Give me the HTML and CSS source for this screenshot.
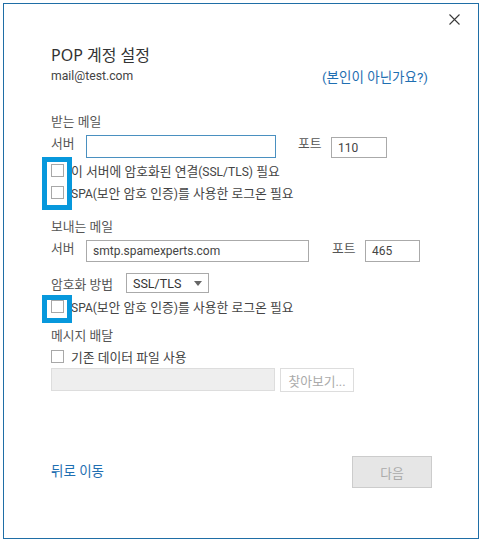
FILE: index.html
```html
<!DOCTYPE html>
<html lang="ko">
<head>
<meta charset="utf-8">
<title>POP 계정 설정</title>
<link rel="stylesheet" href="styles.css">
</head>
<body>
<div class="window">
  <button class="close" aria-label="닫기">
    <svg width="11" height="11" viewBox="0 0 11 11"><path d="M0.5 0.5 L10.5 10.5 M10.5 0.5 L0.5 10.5" stroke="#3a3a3a" stroke-width="1.1" fill="none"/></svg>
  </button>
  <div class="content">
    <div class="title">POP 계정 설정</div>
    <div class="account-row">
      <span class="email lat">mail@test.com</span>
      <a class="link" href="#">(본인이 아닌가요?)</a>
    </div>

    <div class="section-label first">받는 메일</div>
    <div class="server-row in">
      <span class="lbl">서버</span>
      <span class="input focus w-in"></span>
      <span class="lbl port-lbl">포트</span>
      <span class="input lat w-port1">110</span>
    </div>
    <div class="cb-row"><span class="cb"></span><span class="cb-text">이 서버에 암호화된 연결<span class="lat">(SSL/TLS)</span> 필요</span></div>
    <div class="cb-row"><span class="cb"></span><span class="cb-text"><span class="lat">SPA(</span>보안 암호 인증<span class="lat">)</span>를 사용한 로그온 필요</span></div>

    <div class="section-label second">보내는 메일</div>
    <div class="server-row out">
      <span class="lbl">서버</span>
      <span class="input lat w-out">smtp.spamexperts.com</span>
      <span class="lbl port-lbl">포트</span>
      <span class="input lat w-port2">465</span>
    </div>
    <div class="enc-row">
      <span class="lbl enc-lbl">암호화 방법</span>
      <span class="select"><span class="lat">SSL/TLS</span><svg class="arrow" width="8" height="5" viewBox="0 0 8 5"><path d="M0 0 H8 L4 5 Z" fill="#666"/></svg></span>
    </div>
    <div class="cb-row cb3"><span class="cb"></span><span class="cb-text"><span class="lat">SPA(</span>보안 암호 인증<span class="lat">)</span>를 사용한 로그온 필요</span></div>

    <div class="section-label third">메시지 배달</div>
    <div class="cb-row cb4"><span class="cb"></span><span class="cb-text">기존 데이터 파일 사용</span></div>
    <div class="file-row">
      <span class="file-input"></span>
      <span class="browse">찾아보기...</span>
    </div>

    <div class="footer">
      <a class="link back" href="#">뒤로 이동</a>
      <span class="next">다음</span>
    </div>
  </div>
  <div class="highlight h1"></div>
  <div class="highlight h2"></div>
</div>
</body>
</html>
```

FILE: styles.css
```css
* { box-sizing: border-box; }
html, body { margin: 0; padding: 0; background: #fff; }
body {
  font-family: Roboto, "Noto Sans CJK KR", sans-serif;
  font-size: 12.8px;
  color: #444;
  padding: 3px;
}
.lat { font-size: 12px; }
.window {
  position: relative;
  width: 476px;
  height: 536px;
  border: 1px solid #1f6ea6;
  background: #fff;
}
.close {
  position: absolute;
  top: 10px;
  left: 445px;
  width: 11px;
  height: 11px;
  padding: 0;
  border: 0;
  background: none;
  display: block;
}
.close svg { display: block; }
.content {
  padding: 40px 50px 0 47px;
}
.title {
  height: 22px;
  line-height: 22px;
  font-family: "Noto Sans", "Noto Sans CJK KR", sans-serif;
  font-size: 16px;
  color: #333;
}
.account-row {
  height: 20px;
  display: flex;
  align-items: center;
  justify-content: space-between;
}
.email { color: #444; font-size: 12.2px; }
.link { color: #1f6fb2; text-decoration: none; }
.account-row .link { font-size: 13.5px; }
.section-label {
  height: 20px;
  line-height: 20px;
  color: #555;
}
.section-label.first { margin-top: 26px; }
.section-label.second { margin-top: 15px; }
.section-label.third { margin-top: 10px; height: 18px; line-height: 18px; }
.server-row {
  display: flex;
  align-items: center;
  margin-top: 3px;
  height: 23px;
}
.server-row.out { height: 22px; }
.lbl { color: #555; flex: none; }
.server-row > .lbl:first-child { width: 35px; align-self: flex-start; line-height: 18px; }
.input {
  display: flex;
  align-items: center;
  height: 22px;
  border: 1px solid #aaa;
  padding: 0 6px;
  color: #444;
  background: #fff;
}
.input.focus { border-color: #4a90c0; height: 23px; }
.w-in { width: 190px; }
.w-port1 { width: 56px; height: 21px; margin-top: 2px; }
.w-out { width: 223px; }
.w-port2 { width: 55px; }
.in .port-lbl { margin-left: 22px; width: 33px; align-self: flex-start; line-height: 18px; }
.out .port-lbl { margin-left: 23px; width: 33px; align-self: flex-start; line-height: 18px; }
.cb-row {
  display: flex;
  align-items: center;
  height: 22px;
}
.cb-row:not(.cb3):not(.cb4) { padding-top: 2px; }
.cb {
  flex: none;
  width: 13px;
  height: 13px;
  border: 1px solid #a8a8a8;
  background: #fff;
  margin-right: 7px;
}
.cb-text { color: #444; }
.enc-row {
  display: flex;
  align-items: center;
  margin-top: 11px;
  height: 20px;
}
.enc-lbl { width: 75px; }
.select {
  display: flex;
  align-items: center;
  justify-content: space-between;
  width: 83px;
  height: 20px;
  border: 1px solid #aaa;
  padding: 0 6px 0 6px;
  color: #333;
}
.select .lat { font-size: 12.5px; }
.arrow { display: block; }
.cb3 { margin-top: 2px; }
.file-row {
  display: flex;
  margin-top: 1px;
  height: 24px;
  align-items: flex-start;
}
.file-input {
  width: 224px;
  height: 23px;
  background: #eee;
  border: 1px solid #ddd;
}
.browse {
  margin-left: 5px;
  width: 74px;
  height: 24px;
  border: 1px solid #ddd;
  color: #aaa;
  display: flex;
  align-items: center;
  justify-content: center;
  background: #fff;
}
.footer {
  margin-top: 64px;
  height: 32px;
  display: flex;
  align-items: center;
  justify-content: space-between;
}
.back { font-size: 13.5px; margin-top: -4px; }
.next {
  width: 80px;
  height: 32px;
  background: #e6e6e6;
  border: 1px solid #ccc;
  color: #aaa;
  display: flex;
  align-items: center;
  justify-content: center;
  margin-right: -4px;
}
.highlight {
  position: absolute;
  border: 5px solid #0798dc;
  pointer-events: none;
}
.h1 { left: 38px; top: 153px; width: 30px; height: 53px; }
.h2 { left: 38px; top: 291px; width: 30px; height: 28px; }
```
